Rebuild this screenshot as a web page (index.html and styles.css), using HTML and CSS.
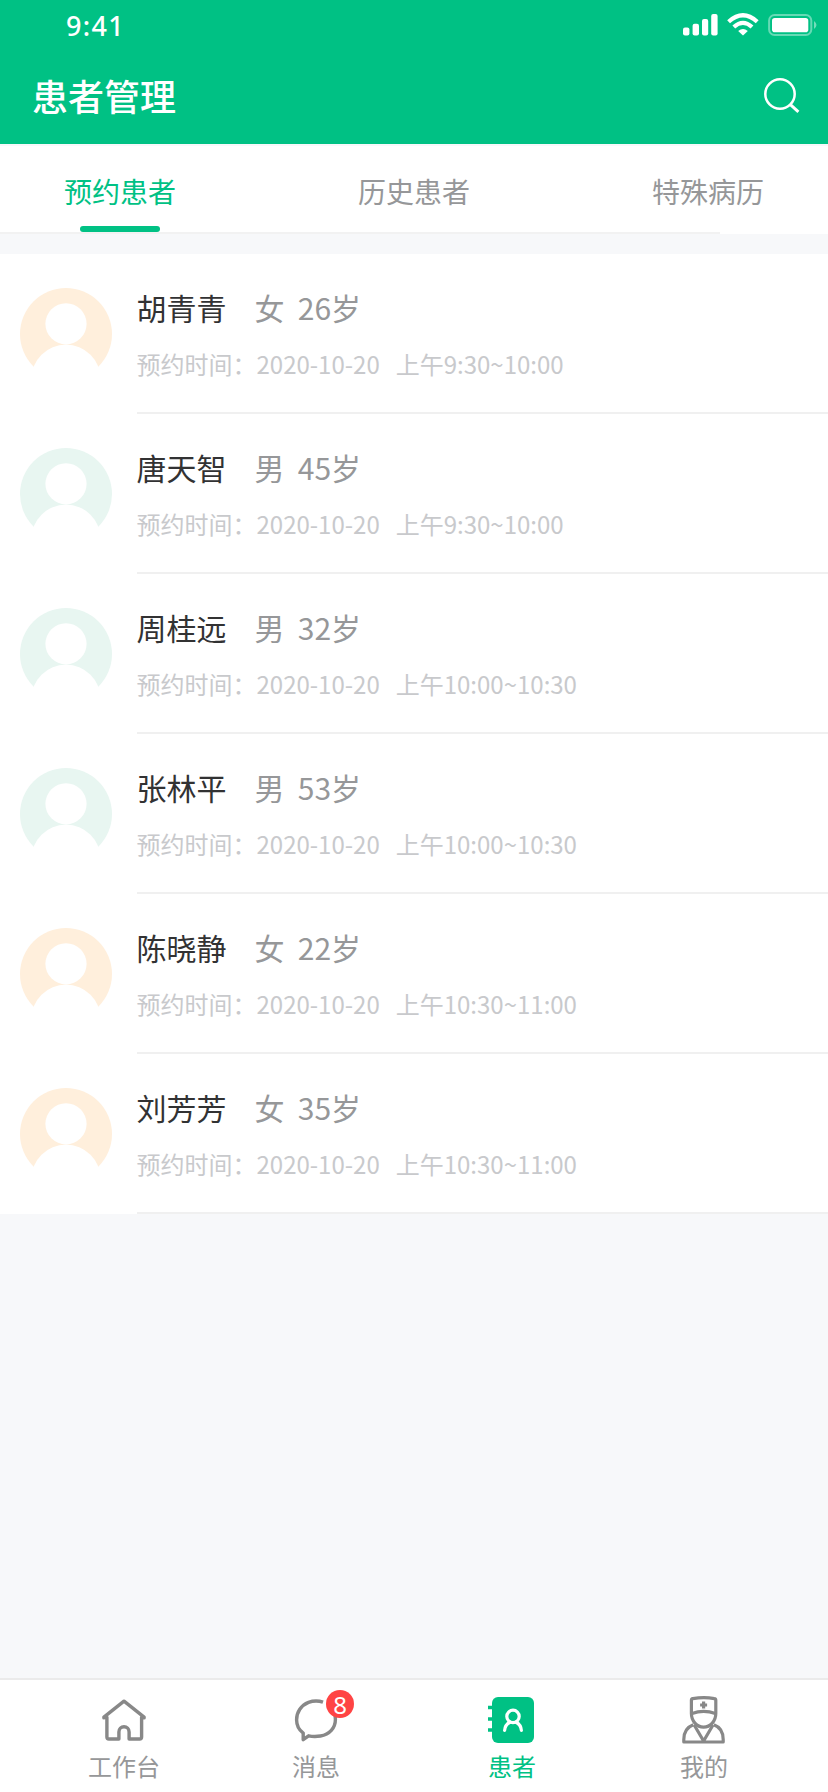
FILE: index.html
```
<!DOCTYPE html>
<html lang="zh-CN">
<head>
<meta charset="utf-8">
<title>患者管理</title>
<link rel="stylesheet" href="styles.css">
</head>
<body>
<svg class="defs" width="0" height="0">
  <symbol id="avatar" viewBox="0 0 92 92">
    <circle cx="46" cy="46" r="46" fill="currentColor"/>
    <circle cx="46" cy="35.8" r="20.6" fill="#fff"/>
    <circle cx="46" cy="91.2" r="34.7" fill="#fff"/>
    <rect y="79" width="92" height="13" fill="#fff"/>
  </symbol>
</svg>
<div class="screen">
  <header class="header">
    <div class="status">
      <span class="clock">9:41</span>
      <svg class="status-icons" width="136" height="24" viewBox="0 0 136 24" fill="#fff">
        <rect x="0" y="15.5" width="6.4" height="8" rx="2"/>
        <rect x="9.6" y="11.7" width="6.4" height="11.8" rx="2"/>
        <rect x="19" y="7" width="6.2" height="16.5" rx="2"/>
        <rect x="28.2" y="2" width="6.4" height="21.5" rx="2"/>
        <g fill="none" stroke="#fff">
          <path d="M45.6 9.7Q60 -3.2 74.2 9.7" stroke-width="4.2"/>
          <path d="M50.8 15Q60 6.8 69 15" stroke-width="4.2"/>
        </g>
        <path d="M60 23.6L55.2 18.9Q60 15 64.8 18.9Z"/>
        <rect x="86.1" y="3" width="42.2" height="20" rx="5.5" fill="none" stroke="#fff" stroke-width="2" opacity=".4"/>
        <rect x="89" y="6" width="36.3" height="14.2" rx="2.8"/>
        <path d="M131 9Q136 13 131 17Z" opacity=".45"/>
      </svg>
    </div>
    <div class="titlebar">
      <h1 class="title">患者管理</h1>
      <svg width="40" height="40" viewBox="0 0 40 40" fill="none" stroke="#fff">
        <circle cx="18" cy="18" r="14.7" stroke-width="2.5"/>
        <path d="M28.4 28.7l8 7.2" stroke-width="3"/>
      </svg>
    </div>
  </header>

  <nav class="tabs">
    <div class="tab active">预约患者</div>
    <div class="tab">历史患者</div>
    <div class="tab">特殊病历</div>
  </nav>
  <div class="tabs-line"></div>

  <main class="list">
    <section class="row"><svg class="avatar female"><use href="#avatar"/></svg><div class="info"><div class="who"><b class="name">胡青青</b><span>女</span><span>26岁</span></div><div class="when"><span>预约时间：2020-10-20</span><span>上午9:30~10:00</span></div></div></section>
    <section class="row"><svg class="avatar male"><use href="#avatar"/></svg><div class="info"><div class="who"><b class="name">唐天智</b><span>男</span><span>45岁</span></div><div class="when"><span>预约时间：2020-10-20</span><span>上午9:30~10:00</span></div></div></section>
    <section class="row"><svg class="avatar male"><use href="#avatar"/></svg><div class="info"><div class="who"><b class="name">周桂远</b><span>男</span><span>32岁</span></div><div class="when"><span>预约时间：2020-10-20</span><span>上午10:00~10:30</span></div></div></section>
    <section class="row"><svg class="avatar male"><use href="#avatar"/></svg><div class="info"><div class="who"><b class="name">张林平</b><span>男</span><span>53岁</span></div><div class="when"><span>预约时间：2020-10-20</span><span>上午10:00~10:30</span></div></div></section>
    <section class="row"><svg class="avatar female"><use href="#avatar"/></svg><div class="info"><div class="who"><b class="name">陈晓静</b><span>女</span><span>22岁</span></div><div class="when"><span>预约时间：2020-10-20</span><span>上午10:30~11:00</span></div></div></section>
    <section class="row"><svg class="avatar female"><use href="#avatar"/></svg><div class="info"><div class="who"><b class="name">刘芳芳</b><span>女</span><span>35岁</span></div><div class="when"><span>预约时间：2020-10-20</span><span>上午10:30~11:00</span></div></div></section>
  </main>

  <footer class="tabbar">
    <div class="item">
      <svg width="52" height="56" viewBox="0 0.7 52 56" fill="none" stroke="#888" stroke-width="3.4" stroke-linejoin="round" stroke-linecap="round">
        <path d="M5.9 26.6V25.9L26 9.9L46.1 25.9V26.6M8.9 26V45.7Q8.9 47.7 10.9 47.7H20.9V40.6A5.1 5.1 0 0 1 31.1 40.6V47.7H41.6Q43.6 47.7 43.6 45.7V26"/>
      </svg>
      <span>工作台</span>
    </div>
    <div class="item">
      <div class="icon-wrap">
        <svg width="52" height="56" viewBox="0 0 52 56" fill="none" stroke="#888" stroke-width="3.4" stroke-linejoin="round">
          <path d="M33 10.2Q26 7.6 18.5 10.3A18.7 18.7 0 0 0 6.6 28C6.6 33.8 9.5 38.3 13.2 41.1V47.7L18.6 43.8Q24 45 30.5 44C39.5 42.5 45.4 36 45.4 27.5Q45.4 25 44.8 22.8"/>
        </svg>
        <span class="badge">8</span>
      </div>
      <span>消息</span>
    </div>
    <div class="item patients">
      <svg width="52" height="56" viewBox="0 2 52 56">
        <rect x="6" y="7" width="42" height="46" rx="6" fill="#00c184"/>
        <path d="M2 17.5H7M2 29H7M2 40H7" stroke="#00c184" stroke-width="3.4"/>
        <g fill="none" stroke="#fff" stroke-width="3.2" stroke-linecap="round">
          <circle cx="27" cy="26.4" r="6.2"/>
          <path d="M18.6 40.5C18.9 36.5 21 33.6 24 32.2M35.4 40.5C35.1 36.5 33 33.6 30 32.2"/>
        </g>
      </svg>
      <span>患者</span>
    </div>
    <div class="item">
      <svg width="52" height="56" viewBox="0 2 52 56" fill="none" stroke="#888" stroke-width="3.2" stroke-linejoin="round">
        <path d="M13.4 10.2Q13.4 8.8 14.8 8.6Q26 6.8 36.4 8.6Q37.8 8.8 37.8 10.2V23.6C37.8 31 32.5 37.1 25.6 37.1S13.4 31 13.4 23.6Z"/>
        <path d="M14 23.6Q25.6 19.2 37.4 23.6M25.6 11.5V18.5M22.1 15H29.1"/>
        <path d="M15.3 34.8C9.5 37 5.8 42.3 5.8 49.5V52H45.2V49.5C45.2 42.3 41.7 37 35.9 34.8M16.2 35L25.6 51L35 35"/>
      </svg>
      <span>我的</span>
    </div>
  </footer>
</div>
</body>
</html>
```
FILE: styles.css
```
* { box-sizing: border-box; }
body {
  margin: 0;
  background: #f7f8fa;
  font-family: "Noto Sans CJK SC", sans-serif;
  color: #969799;
}
.defs { position: absolute; }
.screen {
  width: 828px;
  height: 1792px;
  display: flex;
  flex-direction: column;
}
.header { height: 144px; background: #00c184; color: #fff; }
.status {
  height: 48px;
  padding: 0 9px 0 66px;
  display: flex;
  justify-content: space-between;
  align-items: flex-start;
}
.clock {
  font: 500 27px/52px "Noto Sans", sans-serif;
  letter-spacing: 1.3px;
}
.status-icons { margin-top: 12px; }
.titlebar {
  height: 96px;
  padding: 0 26px 0 32px;
  display: flex;
  justify-content: space-between;
  align-items: center;
}
.title { margin: 0 0 2px; font-size: 36px; line-height: 52px; font-weight: 500; }
.tabs {
  height: 88px;
  border-top: 2px solid #f7f8fa;
  background: #fff;
  padding: 0 64px;
  display: flex;
  justify-content: space-between;
}
.tab {
  height: 86px;
  padding-top: 24px;
  font-size: 28px;
  line-height: 42px;
  display: flex;
  flex-direction: column;
  align-items: center;
  justify-content: space-between;
}
.active { color: #00c184; }
.tab.active::after {
  content: "";
  width: 80px;
  height: 6px;
  border-radius: 3px;
  background: #00c184;
}
.tabs-line {
  height: 2px;
  background: linear-gradient(to right, #f2f2f2 720px, #fff 720px);
}
.list { margin-top: 20px; background: #fff; }
.row { height: 160px; display: flex; padding-left: 20px; gap: 24.5px; }
.avatar { width: 92px; height: 92px; margin-top: 34px; flex: none; }
.female { color: #ffefdc; }
.male { color: #e8f6f1; }
.info { flex: 1; padding-top: 31px; border-bottom: 2px solid #f0f0f0; }
.who { display: flex; gap: 13.3px; font-size: 30px; line-height: 44px; }
.name { font-weight: 400; color: #323233; margin-right: 14.7px; }
.when {
  display: flex;
  gap: 16px;
  margin-top: 17px;
  font-size: 24px;
  line-height: 36px;
  color: #c8c9cc;
}
.tabbar {
  height: 114px;
  margin-top: auto;
  border-top: 2px solid #ebebeb;
  background: #fff;
  padding-left: 28px;
  display: flex;
}
.item {
  width: 192px;
  padding-top: 12px;
  display: flex;
  flex-direction: column;
  align-items: center;
  font-size: 24px;
  line-height: 36px;
}
.item svg { display: block; }
.patients { margin-left: 4px; color: #00c184; }
.icon-wrap { position: relative; }
.badge {
  position: absolute;
  left: 36px;
  top: -2px;
  width: 28px;
  height: 28px;
  border-radius: 50%;
  background: #ff4444;
  color: #fff;
  font: 24px/30px "Noto Sans", sans-serif;
  text-align: center;
}
```
